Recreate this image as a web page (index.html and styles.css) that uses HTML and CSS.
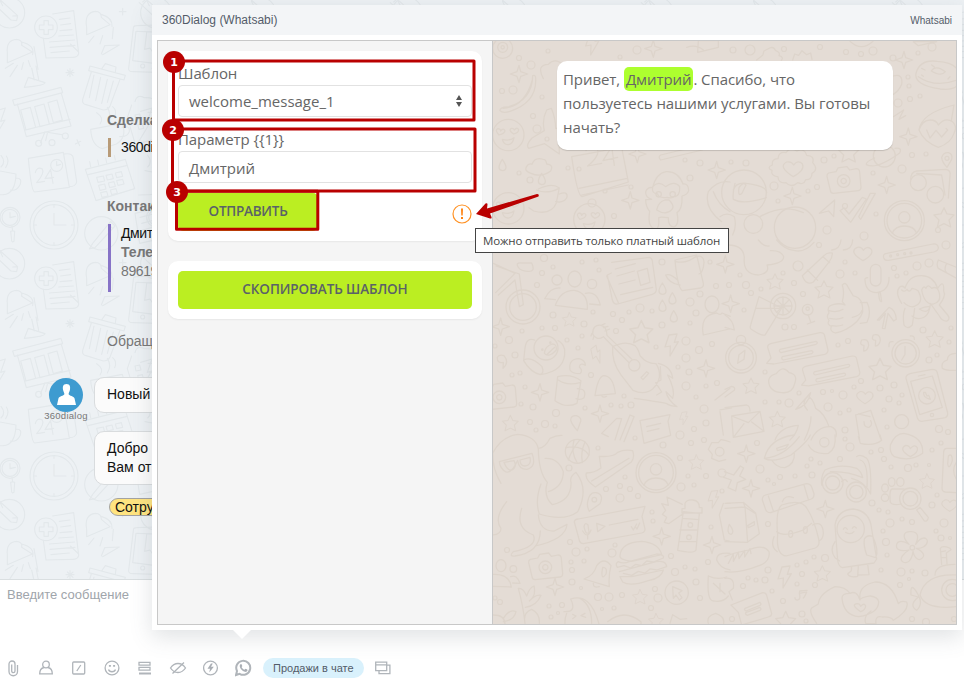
FILE: index.html
```html
<!DOCTYPE html>
<html lang="ru">
<head>
<meta charset="utf-8">
<title>360Dialog (Whatsabi)</title>
<link rel="stylesheet" href="styles.css">
</head>
<body>
<div class="app">
  <main class="chat">
    <svg class="chat-bg" width="964" height="579">
      <defs>
        <pattern id="office" width="251" height="251" patternUnits="userSpaceOnUse">
          <g transform="scale(.33333)" class="office-lines">
            <g id="tile">
              <circle cx="28" cy="38" r="46"/><path d="M-12 6l10-9 55 50-3 15-17-2-55-52M-2-3l10 20M38 48l15-1"/>
              <circle cx="138" cy="82" r="34"/><path d="M132 62h13v13h14v14h-14v14h-13v-14h-14v-14h14zM158 42l63-10 15 128q-2 12-18 12l-80 2-8-60M178 58l32-4M182 75l30-4M180 92l36-3M176 108l44-3M148 126l76-6M150 142l75-6M153 158l55-5M211 132l25 24"/>
              <path d="M22 158q-4-38 28-40 18 2 15 18l32 20-75 32zM65 126q40 10 33 38M70 188l-5 20M52 196l-22 34M40 190l-24 15M85 182l6 18M73 262l12-30 50 16q0 8-62 14M95 204l8 36M108 198l8 40M102 140l12 68"/>
              <path d="M260 82q-8-44 26-48 18 0 18 18l26 22-70 30zM304 43q34 10 32 36M282 108l-16 20M308 107l-8 25M340 82l-3 34M304 162l10-25 44-2-50 29"/>
              <path d="M400 85q0-8 10-8l58-2M400 85l-14 120q-1 10 12 10l75 2M408 94l-10 88 70 9M410 94l60 2M440 98l-6 50 16-4 12 18"/><circle cx="428" cy="198" r="6"/>
              <path d="M210 206v24M198 218h24M202 210l17 16M219 210l-17 16M368 25v20M358 35h20"/>
              <path d="M270 198l106 28-4 14-106-28zM274 216l-26 82q-2 14 10 16l52 16q14 0 20-12l30-80M306 205l10-14 32 10-2 16M282 225l-14 68M302 232l-15 70M322 238l-17 72M340 243l-18 64"/>
              <path d="M38 300l145-38 5 16-145 38zM52 312l27 98 134-32-29-98M62 330l29-8 16 60-29 8zM104 320l28-8 16 60-28 8zM144 308l27-8 16 60-27 8zM74 390l136-32M135 395l-14 34M137 396l48 8M142 400l-5 22"/><circle cx="116" cy="430" r="9"/><circle cx="156" cy="428" r="9"/><circle cx="196" cy="408" r="9"/>
              <path d="M-18 334l34-10-14 40 13-4-42 70M226 432l16-8M231 419l8 18"/>
              <path d="M272 388l95-18q15 42-18 62l-42 14q-32-8-35-58zM366 382q24-8 22 12-4 17-29 16M300 372q14-18-10-34M322 366q14-22 0-44M344 350q8-18-6-30M405 305q5-24 28-12 35-1 35 18M395 315l-13 38 24 80 68-18M405 345l14-3 4 15-15 3zM413 374l14-3 4 14-14 3zM444 337h30M449 365h25"/>
              <path d="M85 475l105-18 18 105-104 14q-10-1-19-101zM192 462q28-4 28 14l10 70q-3 14-22 14"/><circle cx="170" cy="496" r="18"/><path d="M170 484v13l12-4M106 518q3-18 20-12 10 12-16 42l24-4M152 508l-17 28 26-4M152 510l7 40"/>
              <path d="M256 508l120-30 28 88-116 36zM264 524l118-28M272 500l-3-15M296 494l-3-14M320 488l-3-14M346 480l-3-13M290 532l20-4 4 15-20 4zM318 526l18-4 4 14-18 4zM346 519l18-4 4 14-18 4zM296 556l18-4 4 15-18 4zM325 549l17-4 4 14-17 4zM350 542l18-4 4 14-18 4zM302 578l18-4 4 14-18 4zM331 570l17-4 4 14-17 4z"/>
              <path d="M-5 512l53 10q-2 60-38 62l-34 1M48 534q20 0 12 20-10 20-29 16M3 501q16-16 0-35M17 503q13-20 2-35"/>
              <circle cx="30" cy="652" r="30"/><circle cx="30" cy="652" r="24"/><path d="M30 638v15l16-4M36 680l2 13M32 694q6-3 12 0l-2 30q-6 4-7-2z"/>
              <circle cx="162" cy="675" r="72"/><circle cx="162" cy="675" r="61"/><path d="M162 640v35h36M162 614v8M162 728v8M102 675h8M214 675h8"/>
              <circle cx="304" cy="700" r="50"/><path d="M278 730l-10 17 17-4 60-65-13-14zM325 672l13 14M405 640l50-12 18 90-54 12zM420 652l40-10M425 670l38-10M428 690l36-10"/>
            </g>
            <use href="#tile" x="440"/><use href="#tile" y="753"/><use href="#tile" y="-753"/>
          </g>
        </pattern>
      </defs>
      <rect width="964" height="579" fill="url(#office)"/>
    </svg>
    <div class="thread">
      <h4>Сделка</h4>
      <div class="entity deal"><span>360dialog</span></div>
      <h4 class="contact-title">Контакт</h4>
      <div class="entity contact"><span>Дмитрий</span><b>Телефон</b><em>89619</em></div>
      <p class="session">Обращение</p>
      <div class="message-row">
        <div class="author">
          <svg width="34" height="34" viewBox="0 0 34 34"><circle cx="17" cy="17" r="17" fill="#3e9bd0"/><path fill="#fff" d="M17.500 6c-3.700 0-4 3-3.400 6 .4 2 1.300 2.600 1.300 4.200-.8 1.800-5 1.800-5.900 4L8 27h19l-1.500-6.800c-.9-2.200-5-2.200-5.900-4 0-1.600.9-2.200 1.300-4.200.6-3 .3-6-3.400-6z"/></svg>
          <small>360dialog</small>
        </div>
        <div class="bubbles"><div class="bubble">Новый</div><div class="bubble">Добро<br>Вам от</div></div>
      </div>
      <span class="tag">Сотрудник</span>
    </div>
  </main>
  <footer class="composer">
    <div class="placeholder">Введите сообщение</div>
    <div class="toolbar">
      <svg viewBox="0 0 16 18" width="16" height="18"><path d="M4 5v7.500a3.500 3.500 0 0 0 8.500 0V6M4 5a3 3 0 0 1 6 0v7a1.600 1.600 0 0 1-3.300 0V5.500"/></svg>
      <svg viewBox="0 0 16 18" width="16" height="18"><circle cx="8" cy="5.500" r="3.300"/><path d="M6 8.500c-3 .7-4.300 2.500-4.300 6.300h12.600c0-3.800-1.300-5.600-4.300-6.300"/></svg>
      <svg viewBox="0 0 16 18" width="16" height="18"><rect x="1.700" y="3" width="12" height="12" rx="1"/><path d="M5.800 12l4-6"/></svg>
      <svg viewBox="0 0 16 18" width="16" height="18"><circle cx="8" cy="9" r="6.900"/><path d="M4.500 10.500c1 3 6 3 7 0"/><path class="thick" d="M5.900 6v1.800M10.100 6v1.800"/></svg>
      <svg viewBox="0 0 16 18" width="16" height="18"><path d="M2 3.300h11v2.800H2zM2 8.400h11v2.800H2z"/><path class="thick" d="M2 14.500h12"/></svg>
      <svg class="wide" viewBox="0 0 18 18" width="18" height="18"><path d="M1.500 9c4-6 11-6 15 0-4 6-11 6-15 0zM3.500 14.500L15 3.500"/></svg>
      <svg viewBox="0 0 16 18" width="16" height="18"><circle cx="7.500" cy="9" r="6.900"/><path class="solid" d="M8 4.500L4.500 9.800H7L6.300 13.500l4.500-5.800H8l1.800-3.200z"/></svg>
      <svg class="wide" viewBox="1 0 18 18" width="18" height="18"><path class="thick" d="M2 16l1-4a7 7 0 1 1 2.600 2.800z"/><path class="solid" d="M6.200 5.600c-2 2.400 2.600 8 6 7.200 1.600-.6 1.500-2 1-2.300l-1.600-.7c-.5 0-.9 1-1.300.9-1.200-.4-2.500-1.700-2.700-2.600.2-.5.800-.7.700-1.200l-.7-1.500c-.4-.5-1-.3-1.400.2z"/></svg>
      <span class="pill">Продажи в чате</span>
      <svg class="wide" viewBox="0 0 18 18" width="18" height="18"><path d="M1.700 3.200h11v8.500h-11zM1.700 5.800h11M12.700 6.200h3.200v8.500H5v-3"/></svg>
    </div>
  </footer>

  <section class="popup">
    <header class="popup-head"><span>360Dialog (Whatsabi)</span><small>Whatsabi</small></header>
    <div class="frame">
      <div class="form-pane">
        <div class="card">
          <label>Шаблон</label>
          <div class="field"><span>welcome_message_1</span><svg width="6" height="12" viewBox="0 0 6 12"><path fill="#555" d="M3 0l3 5H0zM3 12L0 7h6z"/></svg></div>
          <label class="next">Параметр {{1}}</label>
          <div class="field value"><span>Дмитрий</span></div>
          <div class="actions">
            <button class="send">ОТПРАВИТЬ</button>
            <svg width="20" height="20" viewBox="0 0 20 20"><circle cx="10" cy="10" r="9" fill="none" stroke="#ff9225" stroke-width="1.200"/><path fill="#ff8210" d="M9 4.500h2l-.3 7H9.300zM9 13h2v2H9z"/></svg>
          </div>
        </div>
        <div class="card"><button class="copy">СКОПИРОВАТЬ ШАБЛОН</button></div>
      </div>
      <div class="preview">
        <svg class="doodles" viewBox="493 41 463 583" width="463" height="583">
          <defs>
            <path id="star" d="M0-30l9 19 21 3-15 15 5 21-20-10-20 10 5-21-15-15 21-3z"/>
            <path id="spark" d="M0-26l5 19 21 7-21 7-5 19-6-19-20-7 20-7z"/>
            <path id="bolt" d="M-5-30l24-3-8 25 12-2-25 43 1-30-16 3z"/>
            <path id="heart" d="M0 20q-45-27-17-40 12-3 18 9 10-14 22-5 14 15-23 36z"/>
            <path id="drop" d="M0-18q22 32 0 34-20-3 0-34z"/>
            <g id="camera"><path d="M-45-22l22-4 6-11 27-4 8 10 20-4q9 0 10 10l4 46q0 9-8 10l-75 8q-8 0-9-9l-10-42q-1-7 5-10z"/><circle cy="2" r="19"/><circle cy="2" r="8"/></g>
            <g id="lovely"><circle r="47"/><path d="M-28 0q-14-15-3-19 7 0 8 7 8-11 13-1-1 9-18 13zM16-3Q-1-14 9-20q7-1 9 5 8-10 13-1 0 9-15 13zM-18 13q21 6 35-5-4 22-19 21-12-1-16-16z"/></g>
            <g id="person"><circle r="60"/><circle r="52"/><circle cy="-10" r="17"/><path d="M-36 38q8-22 36-22 29 0 37 21"/></g>
            <g id="lines"><path d="M-80-10L65-42q13-1 14 10l10 42q0 10-10 13L-73 52l-22-2 13-16-10-32q-1-9 12-12z"/><path d="M-55 8l108-24q8 4 0 9L-52 18q-8-4-3-10zM-48 30l88-18q8 4 0 9L-45 40q-8-4-3-10z"/></g>
          </defs>
          <g transform="translate(490 40) scale(.33333)">
            <circle cx="38" cy="25" r="30"/><circle cx="38" cy="22" r="15"/><circle cx="38" cy="22" r="5"/>
            <use href="#lovely" x="55" y="285"/><use href="#lovely" x="55" y="505"/><use href="#lovely" x="298" y="538"/>
            <use href="#spark" x="87" y="102"/><use href="#spark" x="490" y="26"/><use href="#spark" x="421" y="481"/><use href="#spark" x="680" y="390"/><use href="#spark" x="442" y="342"/>
            <use href="#bolt" x="304" y="12"/><use href="#drop" x="37" y="376"/><use href="#drop" x="155" y="418"/>
            <path d="M128 107q9-3 9 8 4 73-77 99-22 7-30-2-2-10 23-11 74-20 75-94zM40 205q65-5 87-85M160 116q-22-42 15-43 20-22 45 2M170 210q-15 29-7 62l-37 22q-20 22-10 31l48-14 44 31-1-40q50-30 50-51l-60 15q0-30-13-61zM123 400q-25-7-10-25 9-5 13-2 8-23 34-15 8 0 10 14 22 2 12 21-29 21-59 7z"/>
            <path d="M145 447q42-20 63-3l-9 45q-15 38-68 24l-14-10M208 462q26-10 23 10-9 18-34 13M140 450q30 14 67-5M245 350l150-28 20 104-139 44q-14-1-31-120zM267 445l145-30M275 465l140-30"/>
            <path d="M288 332q8-25 33-11 12 25-28 57l42-8M365 320l-26 42 44-10M365 320l8 56"/>
            <path d="M485 478q-20-7-18-23 6-15 21-12 10-43 40-48 37-2 51 37 17-2 17 20-4 13-20 16 2 40-15 50 8 38-10 43-17-3-16-28-25-3-29 0 3 34-10 34-25-5-17-53-12-15-12-35zM488 440q18-20 39 0 28-20 42 0 2 30-18 30-8 6-20 2-26 3-28-10-19-1-15-22z"/><circle cx="506" cy="463" r="8"/><circle cx="548" cy="463" r="8"/><path d="M500 510q5-25 25-30l12 0q18 18 9 28-18 20-46 2zM655 455q28-36 65-29M655 455q-15 48 40 90M670 455q15 40 50 60M512 345l125-30q8 9 0 15l-125 30q-9-9 0-15zM590 22q28-10 50 8M625 2h60v20l-62 15z"/>
          </g>
          <g transform="translate(720 0) scale(.33333)">
            <path d="M110 180l18-14 4-13 17-9q12-5 17 7 16 6 11 16 16 5 7 14M218 180l6-18 12 4 10-14 14 12 12-5 4 19M390 124q34 32 69 0M580 125l70 0-55 12z"/>
            <use href="#spark" x="552" y="180"/><use href="#spark" x="565" y="410"/><use href="#spark" x="500" y="555"/><use href="#spark" x="217" y="588"/><use href="#star" x="386" y="458"/><use href="#star" x="672" y="653"/>
            <path d="M588 220q11-43 64-36 58 4 62 33l-2 38q-8 16-52 12-79-13-72-47zM595 230q50 35 116 10M634 213q12-20 42 2-12 16-42-2M605 205l10 5M635 195l8 6M690 230l-6 7M605 225l5 4M597 390q6-50 105-75l-8 47q20 15 8 38-10 30-47 42-44-17-58-52zM597 390q10-30 34-30 18 0 24 15 20-25 43-10M620 390l10 24 18-23 17 20 18-21-5-5"/>
            <circle cx="493" cy="468" r="33"/><path d="M464 474q-28 12-25 20 30 16 100-35 9-17-14-14M520 228q30-8 25 25-8 20-25 30M520 350l31-20-14 28 20-11M665 472q5-15 20-14 14 4 10 20l-14 24q-15-16-16-30z"/><circle cx="681" cy="475" r="6"/>
            <path d="M157 495q-3-18 17-19 1-22 24-18 12-19 33-5 23-10 29 13 25 1 18 22 19 20-2 32 0 20-19 19-6 17-24 9-20 17-35 0-23 3-24-17-23-4-18-20-18-8 1-16zM220 530q-48-30-20-44 15-3 21 9 13-16 26-4 9 19-27 39z"/>
            <use href="#camera" x="371" y="541"/><path d="M572 540q0-25 18-27l88-5q15 3 12 18l-5 68M590 520l75 5 10 60"/><circle cx="595" cy="548" r="24"/><circle cx="646" cy="584" r="25"/><circle cx="72" cy="577" r="67"/><path d="M45 550q-8 30-5 48 30 17 99-5M40 570q8-25 40-20 60 8 60 28M57 563q12-19 21-8l-12 25q-13 12-9-17zM0 650q20-15 43 0 8 30-5 55M120 650q70-40 130-12"/><use href="#person" x="553" y="662"/>
            <circle cx="225" cy="683" r="62"/><circle cx="100" cy="672" r="28"/><path d="M298 640l46-40-3 50-15-17zM360 632l12-8 15 18 40-50 12 5-47 70zM416 650l35-70 15 0-44 78z"/>
          </g>
          <g transform="translate(490 240) scale(.33333)">
            <path d="M10 70l65 30-58 58M18 78l70 24 12 92-12 6-13-80-50 45M85 82q-10-15 10-13h30q13 28-12 25-23-1-28-12z"/><circle cx="99" cy="201" r="51"/><circle cx="99" cy="201" r="40"/><circle cx="201" cy="120" r="15"/><circle cx="306" cy="132" r="14"/><ellipse cx="254" cy="117" rx="20" ry="24"/><path d="M196 196q16-46 57-45 42 7 39 57zM164 176q17-34 46-32M164 176l32 3M286 160q34-9 45 35l-32-3M350 108l35 80M365 67l113-15q8 2 9 11l12 85q0 12-12 15l-104 29q-12 2-16-12l-15-75 12-6M376 87l60-16M381 108l52-15M387 132l48-12M392 164l96-22M442 94l30-9 8 42-28 9z"/>
            <path d="M555 60l65-15 20 85q2 10-8 14l-55 8q-15-10-22-92zM564 121q-23-22-37-16 9 25 43 30M614 52q26-11 28 15-2 30-15 35M557 65q35 7 61-16"/><use href="#drop" x="517" y="147"/><use href="#drop" x="547" y="176"/><use href="#drop" x="517" y="198"/><use href="#drop" x="551" y="230"/>
            <use href="#spark" x="706" y="73"/><use href="#spark" x="32" y="260"/><use href="#spark" x="648" y="385"/><use href="#spark" x="150" y="457"/><use href="#spark" x="330" y="521"/><use href="#star" transform="translate(238 239) scale(.7)"/><use href="#star" transform="translate(454 276) scale(1.150)"/><use href="#star" transform="translate(61 550) scale(.8)"/><use href="#bolt" x="542" y="315"/><use href="#bolt" transform="translate(318 346) rotate(-30) scale(.8)"/><use href="#bolt" transform="translate(580 535) scale(.6)"/>
            <circle cx="168" cy="324" r="36"/><circle cx="157" cy="329" r="2"/><circle cx="181" cy="308" r="2"/><path d="M163 340q2-22 24-28 14 0 12 18-22 25-36 10zM170 344l24-22M134 300q-25-9-29 24l-4 38q20 35 50 42 78-11 73-75-5-20-20-27M101 360q23-13 55 20 8 20-7 24M240 390q-5-33 26-34 20 4 20 20-16-9-18 5 12 12 2 20-24 0-30-11zM203 410q40-10 70 12l-12 68q-33 16-66-8zM205 420q25 18 65 8M262 446q30 0 20 27-10 8-24 3M315 467q8-54 25-60 30 0 36 54zM335 467q5 8 15 2"/>
            <path d="M340 290q-20 14-32-8 0-29 25-26 17 3 18 30l75 72M340 290l77 78M335 255l10-4M340 263l14-4M345 273l14-6M306 280l-3 8M312 288l-3 10"/><circle cx="433" cy="376" r="17"/><path d="M368 320q39-20 67-3 10 10 15 30 20 25 48 24 25 40-9 75-25 21-60 5l-35-45q-30-40-26-86zM453 413l17-18 6 5-17 19zM505 370q40 10 43 45l-15-10q24 46 15 70l-20-20q4 25 33 45-20-1-33-10-24-5-95-15M511 380l2 40-16 8 18 28-15 9"/>
            <use href="#camera" x="28" y="470"/><path d="M22 352q5-10 20-5 17 21-3 38l1-18q-19 4-18-15zM242 540q1-14 17-13 18 6 12 20l-9 25q-17-19-20-32zM355 590l-20-10 45-45 15 1-20 64M390 600l30-75 12 5-30 75M450 542l90-18-6 20 8 42-80 24zM470 560l42-10M472 574l35-8M690 510l35-6M675 480l45-35M690 515l10 70M640 285q-12-60 40-66 12 8 16 0l25 10M640 285l78-18"/><ellipse cx="666" cy="193" rx="21" ry="25"/>
          </g>
          <g transform="translate(725 240) scale(.33333)">
            <path d="M10 15q45 0 48 38-5 50 43 52 35-6 25-30 50-5 50-25-8-20-40-18M100 0q15 20 32 18M155 0q25 30 55 32 30 6 57-25M320 30q25-2 28-30M355 30q27-2 28-30M485 40q-12 2-9 13 4 10 15 8l135-25q15-4 14-14-3-12-16-10z"/>
            <circle cx="497" cy="48" r="3"/><circle cx="518" cy="44" r="3"/><circle cx="539" cy="41" r="3"/><circle cx="558" cy="39" r="3"/>
            <use href="#heart" x="414" y="42"/><use href="#heart" transform="translate(420 473) scale(.9)"/><path d="M232 107l66-61q8-10 24-7 0 15-9 26l-48 61q-22 12-33-19zM247 90l31 31M294 50l20 18M640 60l55 22M640 85l55 30M640 60q-7 15 0 25M665 70q-10 20 0 28"/>
            <use href="#star" transform="translate(150 125) scale(.8)"/><use href="#star" transform="translate(297 149) scale(.9)"/><use href="#star" transform="translate(78 438) scale(.8)"/><use href="#star" transform="translate(157 538) scale(.8)"/><use href="#star" transform="translate(465 388) scale(1.100)"/><use href="#star" transform="translate(629 298) scale(.85)"/><use href="#spark" x="17" y="191"/>
            <path d="M102 170l68 34-49 80q-8 6-40-15-8-2-4-14zM92 205h77"/><circle cx="174" cy="198" r="38"/><circle cx="174" cy="198" r="27"/><path d="M174 172v52M148 198h52M156 180l36 36M192 180l-36 36"/><circle cx="248" cy="209" r="16"/><circle cx="248" cy="206" r="5"/><path d="M250 226l8 22M247 252l22-8"/>
            <rect x="436" y="73" width="32" height="65" rx="16"/><path d="M420 120q2 37 35 38 38-5 37-46M428 113q-10 0-8 8M456 158l10 0 4 26q-7 4-9-24"/>
            <path d="M352 185q7-28 0-50 10-12 18 8l15 25q30 5 28 48-9 30-50 52-12 8-32 11-18-5-12-20-15-6-7-18-10-13 0-22-9-20 12-25 20-6 36 1zM312 212q25 7 42-4M314 235q26 5 40-2M320 257q20 3 33-2M406 188l20-1q15 30 0 60l-20 3M382 232q24-5 29-21"/>
            <path d="M530 190q-22-34-5-50 11-4 15 5 12-39 50-38 36 1 48 38 20-30 18 8 8 15-13 42l25 30q9 12-2 18-15 1-23-15l-27-38q-2 45-35 46-10 0-20-8M530 150q8 8 16-2 7 12 15-3 12 2 18 7 18 32-5 44-16 12-37-8M590 150q6-15 13-5 5-15 17 0 19-10 24 20 3 22-19 27-27 2-35-42M540 205q-8 20-3 50 10 16 25 0l7-50M583 207q15-8 32-8-7 25-32 8z"/>
            <path d="M457 240l35-38q20 7 22 36l-8 5-17-23-9 46-8-1 9-45-18 20z"/><circle cx="48" cy="353" r="46"/><circle cx="48" cy="353" r="37"/><circle cx="48" cy="300" r="14"/><path d="M38 370l4-26 18-13-3 27z"/><use href="#lines" x="220" y="320"/><use href="#lines" transform="translate(320 388) scale(.95)"/>
            <path d="M410 300q20-6 21 16-3 16-15 17l1-17q-15 0-7-16zM445 285q20-6 21 16-3 16-15 17l1-17q-15 0-7-16zM135 440q-14-30 19-39 20-27 38-3 28 5 17 33-7 33-45 26-20-1-29-17zM695 340q-28 0-28 20-20 6-15 25 14 8 43 6"/><circle cx="542" cy="340" r="41"/><circle cx="542" cy="340" r="32"/><path d="M540 319v24l-10 17M492 320q-2-18 12-15M556 288q13-2 12 10"/>
            <path d="M558 400l64-12q13 0 15 11l31 120q1 12-10 15l-68 10q-9 0-13-11l-34-118q-2-11 15-15zM557 424l65-16 30 94-68 22zM580 408l20-4"/><circle cx="606" cy="467" r="25"/><circle cx="621" cy="525" r="5"/><path d="M596 457q-2 16 20 21l-5-12-5 2-5-11z"/>
            <path d="M0 503l65-8q10 3 10 18M20 528l85-14 12 60-92 18zM20 528l50 20 35-34M27 590l30-39M116 573l-36-27M247 470q15 0 25 35 27 15 40 55M247 470q-20 20 0 40M212 508l45-50q-8 40-45 50M258 530q0 30-20 70M258 600q20-42 60-40 20 8 15 30M150 600q15-40 70-44-5 25-25 44M392 525l45-14 30 85M392 525l12 75M400 522l35 8M417 545q0 18 15 17 12-7 5-20M0 448l20-9q12 2 8 12l-28 20M0 225q25 15 28 45l-28-8"/><circle cx="530" cy="545" r="21"/>
          </g>
          <g transform="translate(490 435) scale(.33333)">
            <path d="M8 55q25-50 75-57 55 5 62 44 1 70 27 100-13 42 15 67 58-12 56-68-5-15 15-29 40 50 5 118-40 30-115 7-14-40 5-90M8 55q0 50 25 90M50 200q-40 50-17 80 0 19-25 20M95 220q-20 60 35 80 15 35-60 50-15 15 5 13 75-10 76-75M145 240q5 50 48 48l38-20q-3 45-95 65M145 40q20 0 35-30 20-10 36-9M165 70q40-2 55 40 0 45-45 60M28 80l98-25q15 40-15 48-25 0-28-27-17 39-35 35-18-10-20-31zM42 82l30-5q10 18-6 28-14 4-24-23zM90 75l30-8q5 24-15 26-15 0-15-18z"/>
            <circle cx="262" cy="49" r="36"/><path d="M228 38q45-10 69 22M252 14q-10 40 10 70M270 14q-25 30-35 61M285 21q-14 30-8 62"/><use href="#person" x="498" y="113"/>
            <path d="M289 114q-6 20 27 42l108-75q11-14 4-34-25-5-45 5-13 15-55 12l5 35q-20 15-44 15zM305 138l112-68M293 200q5-30 25-27 25 5 12 33l-32 23q-8-14-5-29z"/><circle cx="313" cy="194" r="7"/><use href="#spark" x="515" y="304"/><use href="#spark" x="666" y="330"/><use href="#spark" x="195" y="456"/><use href="#star" transform="translate(619 82) scale(.75)"/><use href="#star" transform="translate(450 486) scale(.75)"/><use href="#star" transform="translate(498 558) scale(.75)"/><use href="#bolt" transform="translate(668 193) scale(.8)"/>
            <path d="M265 252l200-38-9 30 9 38q0 10-10 12l-175 32q-10-1-12-10l-15-55q0-8 12-9zM320 265l25 9-22 16zM358 270l86-17M282 275q3-15 12-5l3 22q-10 10-15-17zM278 288q15 25 25-3M293 302v10M424 275l6 10 10-18M435 275l6 7 8-18"/>
            <path d="M585 205q5-12 24-10 20 3 19 23h8v16h-60v-13h9zM580 230l48 5-10 110q-5 12-55 1zM577 250l50 4M570 285h51M568 320h50M577 208l-46-22 4 25-20-5 12 20-10 12 13 9-7 15 13 4 43-30"/><circle cx="601" cy="270" r="7"/><circle cx="597" cy="307" r="7"/>
            <path d="M390 362q3-40 65-43 52 5 60 40l-90 20q-38-5-35-17zM385 380q15 8 35-1l80-22q25 2 20 12l-30 12-20-3-15 14-18-4-15 11-20-7-20 5q-8-12 3-17zM388 410l110-30q30-5 32 15l-30 10-20-3-15 12-20-5-20 12-25-6M390 425l35 0 95-20q-6 25-45 32-55 19-77 4z"/><use href="#camera" x="166" y="395"/>
            <path d="M282 432q30-10 38-40 22-28 43 0-8 30-5 63zM310 445q-1 15 18 10M338 397q15 0 10 20-14 20-12-7zM8 418q50-3 56 38l-56-2M62 425q18-8 28 20l-22-1"/><ellipse cx="33" cy="392" rx="15" ry="18"/><circle cx="70" cy="402" r="10"/><circle cx="560" cy="473" r="35"/><path d="M548 455l28 12-10 7 10 14-8 7-10-15-8 10z"/>
            <path d="M655 423q28 13 55 3M655 423q-5 75 15 75 30 5 45-15M670 445l35 32M690 445v25M720 355q-40-5-40 20 10 25 40 30M710 205l10 0M688 240l12-35M688 240l15 75 15 3M222 530q40 2 20-38 60-20 85 75M230 535q-6 16-5 30M270 490q35 20 35 75M248 538l10 5-10 8M285 535l-12 7 14 5M353 560q50-40 100 0v10M105 565q-5-50-20-105 15-2 25 23 8-25 22-30 7 30-14 45 18-20 35-17-13 32-47 36M105 565q-7-32 20-42 25 12 23 42M10 540q35 0 35 28M40 550q20-30 38-20-5 25-38 30M540 565l8-26 22 14 20-2M655 565q-7-22 22-30 28 10 24 30"/>
            <path d="M655 43l10-20 20 0 8-9 15 3 12 4M655 43l12 15-2 12 22 9 20-5"/><circle cx="689" cy="50" r="13"/>
          </g>
          <g transform="translate(725 435) scale(.33333)">
            <path d="M118 70q15-60 90-70M118 70q25 15 80-10 50-40 58-60M118 70q60-5 105-65M155 40l35-12-8 12-25 7zM140 75q15 24 40 23 30-10 28-43M250 30q15 30 60 25 25-14 20-55M400 5l6 20q40 10 64-9l-5-16M496 30q15-35 40-35 60 10 57 60-37 27-85 10-15-10-12-35zM556 65q-37-22-14-34 11 0 14 10 12-15 21-3 4 15-21 27z"/><circle cx="298" cy="22" r="14"/>
            <use href="#spark" x="64" y="56"/><use href="#spark" x="78" y="160"/><use href="#spark" x="301" y="222"/><use href="#star" transform="translate(606 139) scale(.75)"/><use href="#star" transform="translate(292 416) scale(.8)"/><use href="#star" x="182" y="559"/><use href="#bolt" x="176" y="426"/><use href="#heart" transform="translate(674 212) scale(.85)"/>
            <path d="M-2 110l28 10 20-27 10 6-12 24 18 10-25 10-5 25-23-10 10-23-23-8M300 105q45-20 95-5 14 10 18 28-45-20-97-18M300 105q-13 20-10 45M395 65q10-10 30 5 15 15 12 105M405 75q25 5 21 80M350 140q10-12 17 0M380 130q40 10 57 47"/><circle cx="323" cy="144" r="31"/><circle cx="323" cy="144" r="21"/><circle cx="394" cy="171" r="30"/><circle cx="394" cy="171" r="20"/>
            <path d="M122 180l122-34q12 0 16 10l7 20q1 12-8 16l-122 41q-12 0-15-9l-10-29q-1-12 10-15zM130 183l15 45M237 150l13 43M172 200q8-22 33-12M158 300q-7-75 12-90 60-20 77 12 20 30 34 90 5 20-10 27l-88 24q-30-5-25-63zM155 290q20 18 80-5l25-20M147 305q-12 30 10 45M263 270q30-15 32 24-1 20-14 24"/><ellipse cx="197" cy="297" rx="6" ry="10"/><ellipse cx="241" cy="285" rx="6" ry="10"/>
            <circle cx="377" cy="282" r="41"/><path d="M330 270q8-46 55-48 50 6 55 60l15 90-8 12-95 14q-12-4-14-23zM355 283q5-10 12 0M382 280q5-10 12-1M362 292q15 9 25-2M418 312q8-14 25-8 20 44 9 64l-27-8q-10-28-7-48zM330 320q-17 25 0 48l14 10M380 395l-1 12-11 10q6 12 30 7l2-32M400 420l32-1-4-32"/>
            <circle cx="556" cy="191" r="32"/><circle cx="556" cy="191" r="22"/><path d="M537 162l-35 0q-10 0-6 40 5 10 33 5M575 225l10-8 25 30q-2 13-12 11z"/><ellipse cx="480" cy="159" rx="10" ry="12"/><ellipse cx="500" cy="141" rx="10" ry="13"/><ellipse cx="526" cy="141" rx="11" ry="13"/><ellipse cx="480" cy="188" rx="11" ry="11"/>
            <path d="M552 328C525 300 540 288 560 290S582 305 572 328C590 300 608 308 607 320S590 342 574 340C600 352 600 365 588 372S566 362 564 349C560 380 545 388 533 380S535 355 552 345C520 352 512 340 515 328S535 316 552 328z"/><circle cx="562" cy="338" r="7"/>
            <path d="M0 205l55-3 37 32 11 62-36 26-67-2M0 220l60-4 32 20M60 216l8 106M55 202l5 14M68 272l20-12v10l-18 8zM13 268q18 23 5 30-15-3-5-30zM0 365q20-10 70-20 45-20 62 5 5 30-30 42-60 24-102 18M10 385l15-28 0 22 15-28 2 20 17-25 0 20 16-25 3 15M0 430q30-5 25 30l-13 10 10 25M18 510l95-37q10 0 12 8l15 55q0 7-10 10l-80 24-10-38zM60 520l45-18q6 6 0 9l-42 17q-7-3-3-8zM62 533l43-16q6 6 0 9l-38 15q-7-3-5-8z"/>
            <path d="M275 565q-25-35-15-46l20-12q2-30 50-52 30 0 45 20M375 475q-25 0-24 15 5 50 50 55 60-10 60-45-3-14-25-17-30 5-31 12-10-30-30-20M405 490q-5-38 45-49 50 0 70 65 8-10 25-5 10 24-40 55-7-12-34-10-22-5-18 20h-30q-10-20 15-38"/>
            <path d="M407 530q-32-22-10-24 7 0 10 8 10-12 15-1-1 12-15 17zM585 480q15-65 110-60M585 480q15 45 110 35M630 420q0-32 60-32M580 480q-25-45-22 0l22 6q-30 25-5 40 20-20 5-45M650 388l-4-48q6-10 28-1l4 5-14 10 2 32M650 350l12-2M650 368h15"/><circle cx="682" cy="465" r="32"/><circle cx="682" cy="465" r="19"/>
            <path d="M695 40h-30q-8 0-9 10l-5 110q0 10 10 11l34 2M670 63q12-10 12 14-10 30-14 10zM210 488q0 8 8 7 10-2 5-20l22-4q-6 15-10 18M223 475l1-7 22-2"/><path d="M695 80q-18 25 0 55"/>
          </g>
          <g id="dots"></g>
        </svg>
        <div class="preview-message">Привет, <mark>Дмитрий</mark>. Спасибо, что пользуетесь нашими услугами. Вы готовы начать?</div>
      </div>
    </div>
  </section>

  <svg class="notes" width="964" height="684" viewBox="0 0 964 684">
    <g fill="none" stroke="#b90000" stroke-width="3" stroke-linejoin="round">
      <rect x="173.500" y="61" width="300.500" height="59"/>
      <rect x="172.500" y="129" width="302.500" height="62"/>
      <rect x="176.500" y="191.200" width="141.300" height="38"/>
    </g>
    <path fill="#b90000" d="M476 214l9.500-10.500q2-1 2 1l-.5 4 50-14.500q2.500 0 1.500 2.500l-48.500 17 1.500 3.500q.5 2-1.500 1.500z"/>
    <g fill="#b90000"><circle cx="174" cy="62" r="11"/><circle cx="173" cy="130" r="11"/><circle cx="177" cy="192" r="11"/></g>
    <g class="digits"><text x="174" y="66">1</text><text x="173" y="134">2</text><text x="177" y="196">3</text></g>
  </svg>
  <div class="tooltip">Можно отправить только платный шаблон</div>
</div>
<script src="dots.js"></script>
</body>
</html>
```
FILE: styles.css
```css
* { box-sizing: border-box; }
body { margin: 0; font-family: "Liberation Sans", Arial, sans-serif; }
.app { position: relative; width: 964px; height: 684px; overflow: hidden; display: flex; flex-direction: column; background: #fff; }
.chat { position: relative; height: 580px; background: #edf1f4; border-bottom: 1px solid #dadfe1; overflow: hidden; }
.chat-bg { position: absolute; inset: 0; }
.office-lines { fill: none; stroke: #e3e8eb; stroke-width: 3.5; stroke-linejoin: round; stroke-linecap: round; }
.thread { position: relative; width: 300px; padding: 111px 0 0 107px; font-size: 14px; line-height: 19px; color: #777; }
.thread h4 { margin: 0; font-size: 14px; line-height: 19px; }
.thread .contact-title { margin-top: 40px; }
.entity { margin: 8px 0 0 1px; padding-left: 10px; border-left: 3px solid #b89b78; display: flex; flex-direction: column; color: #111; letter-spacing: -.4px; }
.entity em { font-style: normal; color: #777; }
.entity b { color: #777; letter-spacing: 0; }
.contact { border-color: #8773c7; padding-bottom: 11px; margin-top: 8px; }
.session { margin: 40px 0 0; }
.message-row { display: flex; margin: 26px 0 0 -63px; gap: 6px; }
.author { width: 44px; display: flex; flex-direction: column; align-items: center; padding-top: 1px; }
.author small { margin-top: -1px; font-size: 9.5px; line-height: 9px; letter-spacing: .25px; }
.bubbles { display: flex; flex-direction: column; gap: 18px; width: 150px; }
.bubble { padding: 7px 12px; border: 1px solid #d9dcde; border-radius: 10px; background: #fbfbfb; color: #111; }
.bubble:first-child { height: 36px; }
.tag { display: inline-block; margin: 13px 0 0 2px; height: 18px; line-height: 17px; padding: 0 5px; border: 1px solid #a3a3a3; border-radius: 9px; background: #ffe480; color: #111; }

.composer { flex: 1; display: flex; flex-direction: column; justify-content: space-between; padding: 7px 5px 6px; }
.placeholder { padding-left: 2px; font-size: 13px; line-height: 16px; color: #a0a5ab; }
.toolbar { display: flex; align-items: center; gap: 17px; height: 20px; }
.toolbar svg { flex: none; fill: none; stroke: #b0b5ba; stroke-width: 1.3; }
.toolbar .wide { margin: 0 -1px; }
.toolbar .thick { stroke-width: 2; }
.toolbar .solid { fill: #a9aeb4; stroke: none; }
.pill { height: 20px; margin-left: -6px; margin-right: -6px; padding: 0 10px; border-radius: 10px; background: #d9f1fc; color: #535c69; font-size: 11px; line-height: 20px; white-space: nowrap; }

.popup { position: absolute; left: 152px; top: 5px; width: 810px; height: 625px; background: #fff; box-shadow: 0 7px 21px rgba(83, 92, 105, .18); }
.popup::after { content: ""; position: absolute; left: 81px; top: 100%; border: 9px solid transparent; border-top-color: #fff; border-bottom: 0; }
.popup-head { height: 30px; padding: 0 10px; display: flex; align-items: center; justify-content: space-between; background: #f3f5f7; color: #535c69; font-size: 12px; }
.popup-head small { font-size: 10px; }
.frame { display: flex; width: 800px; height: 585px; margin: 5px; border: 1px solid #c8c8c8; font-family: "Open Sans", "Noto Sans", sans-serif; font-size: 16px; line-height: 24px; color: #666; }
.form-pane { width: 335px; padding: 10px; background: #f5f5f5; border-right: 1px solid #c8c8c8; display: flex; flex-direction: column; gap: 20px; }
.card { padding: 10px; background: #fff; border-radius: 10px; box-shadow: 0 1px 2px rgba(0, 0, 0, .06); }
.card label { display: block; height: 24px; font-size: 15px; letter-spacing: -.1px; }
.card .next { margin-top: 10px; }
.field { display: flex; align-items: center; justify-content: space-between; height: 32px; padding: 0 9px 1px 10px; border: 1px solid #e2e2e2; border-radius: 4px; font-size: 15px; }
.value { padding: 1px 9px 0 10px; }
.actions { display: flex; align-items: center; justify-content: space-between; margin-top: 10px; }
.actions svg { margin-top: 4px; }
.card button { display: block; height: 38px; padding: 0 0 2px; border: 0; border-radius: 5px; background: #bbee22; color: #5a6268; font: 600 13.5px "Open Sans", "Noto Sans", sans-serif; letter-spacing: -.1px; }
.card .send { width: 140px; letter-spacing: -.25px; }
.card .copy { width: 100%; }
.preview { position: relative; flex: 1; background: #e4dcd5; overflow: hidden; padding: 20px 0 0 64px; }
.doodles { position: absolute; left: 0; top: 0; fill: none; stroke: #ddd4cb; stroke-width: 3.8; stroke-linejoin: round; stroke-linecap: round; }
#dots { stroke-width: 1.2; }
.preview-message { position: relative; width: 336px; height: 89px; padding: 6px 6px; border-radius: 10px; background: #fff; box-shadow: 0 1px 1px rgba(0, 0, 0, .15); font-size: 15px; letter-spacing: -.08px; }
mark { background: #adff2f; color: inherit; border-radius: 5px; padding: 2px; }

.notes { position: absolute; left: 0; top: 0; pointer-events: none; }
.digits { fill: #fff; font: bold 11px "DejaVu Sans", sans-serif; text-anchor: middle; }
.tooltip { position: absolute; left: 475px; top: 228px; width: 254px; height: 25px; padding: 0 7px; border: 1px solid #444; background: #fff; color: #444; font: 11.5px/23px "Open Sans", "Noto Sans", sans-serif; letter-spacing: -.15px; white-space: nowrap; }
```
FILE: dots.js
```js
// Small rings scattered between the doodles: [x, y, radius]
const rings = [
  [519,58,2.5],[531,65,4],[548,51,2],[502,91,2.5],[513,90,4],[542,97,2],[533,116,2.5],[537,129,4],[547,139,2],[568,168,2],[519,173,2],[530,180,3],[579,169,2],[592,203,4],[605,191,2],[614,216,2.5],[631,187,2],[637,50,4],[620,57,2],[690,178,3],[685,160,2],[700,163,3],
  [733,50,3],[750,50,5],[784,49,2.5],[820,47,2.5],[846,52,2.5],[861,54,2.5],[873,51,4],[893,58,3],[918,53,2],[932,47,4],[908,77,2],[909,86,2],[910,99,2.5],[898,103,4],[920,96,2],[912,155,2.5],[926,154,2],[902,169,4],[824,160,3],[834,156,2],[774,186,4],[778,201,2],[817,187,2.5],[808,191,2],[845,206,2.5],[873,173,2],[827,230,4],[864,236,4],[876,214,2],[938,230,2.5],[731,162,2],[746,163,3],
  [544,258,3.5],[542,273,2.5],[537,285,2.5],[553,267,2],[582,262,2],[596,260,2],[599,270,2],[662,262,3],[710,262,2],[716,286,2.5],[690,302,4],[700,294,3],[696,313,3],[662,325,3],[690,323,2],[686,341,4],[699,350,3.5],[712,344,2.5],[640,308,4],[613,314,2.5],[622,320,2.5],[629,312,2],[652,311,2],[593,312,2],[584,324,3],[616,331,2.5],[582,336,2],[567,340,2],[578,348,2],[553,315,3],[555,328,2.5],[542,328,2],[522,331,2],[509,340,3.5],[515,355,3],[495,346,2],[512,375,2],[520,373,2],[591,375,2.5],[525,387,2],[521,404,2],[533,407,3],[556,413,3.5],[530,422,2.5],[545,424,3.5],[536,430,2],[555,426,2],[585,408,2],[611,405,2],[621,406,2],[631,405,3],[624,396,2],[656,347,2],[678,367,2],[686,358,4],[689,372,3],[686,386,4],[696,397,2],[706,386,2],[717,383,2.5],[704,409,4],[706,423,3],[694,429,2.5],[680,435,4],
  [819,245,2.5],[845,262,2],[855,273,2],[840,274,4],[798,266,5],[783,273,2],[794,283,2.5],[803,294,2.5],[740,275,2],[746,285,3.5],[751,293,2.5],[761,289,2],[744,310,2],[729,285,2.5],[785,327,3],[794,327,2.5],[838,345,2],[848,341,2.5],[917,266,4],[929,263,4],[894,268,2.5],[897,276,2],[906,273,2],[946,245,4],[923,330,3],[951,328,2],[949,342,2],[937,355,2],[929,360,3],[765,372,2],[779,402,2],[789,403,4],[799,393,2],[823,392,2.5],[832,391,1.5],[843,395,4],[828,407,4],[840,413,2],[849,410,2],[845,430,3],[854,387,2],[861,381,2.5],[880,388,3],[894,385,3],[889,399,3],[902,395,2],[899,403,2],[884,410,2],[887,427,2],[939,429,3.5],[948,432,2.5],[765,402,2],
  [598,448,2],[569,468,3],[606,489,2.5],[620,486,2.5],[630,489,2.5],[620,498,4],[638,496,2.5],[625,477,2],[635,438,2],[663,445,3],[680,458,2.5],[691,443,2.5],[704,440,2.5],[688,476,2],[706,476,2.5],[694,485,2],[681,487,4],[722,473,4],[722,491,2],[652,512,2],[653,521,2],[711,527,2],[708,562,2.5],[671,556,2.5],[685,567,2],[695,569,2],[675,572,3.5],[696,582,3],[700,598,2.5],[570,542,2.5],[576,552,4],[587,549,2],[612,553,4],[615,545,2],[571,562,2],[584,561,2],[572,570,2.5],[572,582,3],[581,588,1.5],[598,597,3.5],[609,597,4],[622,595,2.5],[614,608,2],[602,609,1.5],[549,606,2],[562,605,2.5],[551,617,2],[558,613,1.5],[655,589,2.5],[658,598,4],[651,608,2.5],[507,550,2.5],[495,598,2],[500,602,2.5],
  [757,443,2.5],[845,439,2],[850,447,4],[871,452,2],[881,450,2.5],[884,459,2.5],[891,467,2],[908,468,3.5],[916,465,2],[929,465,1.5],[932,450,2],[941,443,2],[760,469,4],[768,480,2],[774,484,1.5],[780,477,2.5],[795,476,2],[807,466,2],[812,475,3],[811,459,2],[820,463,2],[840,459,2.5],[872,503,3],[879,510,2],[888,512,2],[890,523,4],[883,531,2],[886,542,3.5],[887,555,2],[902,519,2],[912,522,2.5],[932,505,3],[937,495,2],[944,523,4],[936,531,2],[941,538,3],[950,538,1.5],[881,570,2],[901,572,4],[912,571,2],[925,573,3],[909,579,1.5],[900,585,2.5],[768,524,2.5],[814,557,2],[825,558,3.5],[806,562,2],[797,565,2],[802,574,2.5],[815,585,2.5],[797,584,2],[768,570,3],[765,580,3],[756,580,2],[748,578,2],[743,586,2.5],[772,591,2],[783,601,2.5],[802,614,3],[806,621,2],[732,619,2.5],[912,619,2.5],[926,622,3.5],[954,619,2.5]
];
const layer = document.getElementById("dots");
for (const [x, y, r] of rings) {
  const ring = document.createElementNS("http://www.w3.org/2000/svg", "circle");
  ring.setAttribute("cx", x);
  ring.setAttribute("cy", y);
  ring.setAttribute("r", r);
  layer.append(ring);
}
```
